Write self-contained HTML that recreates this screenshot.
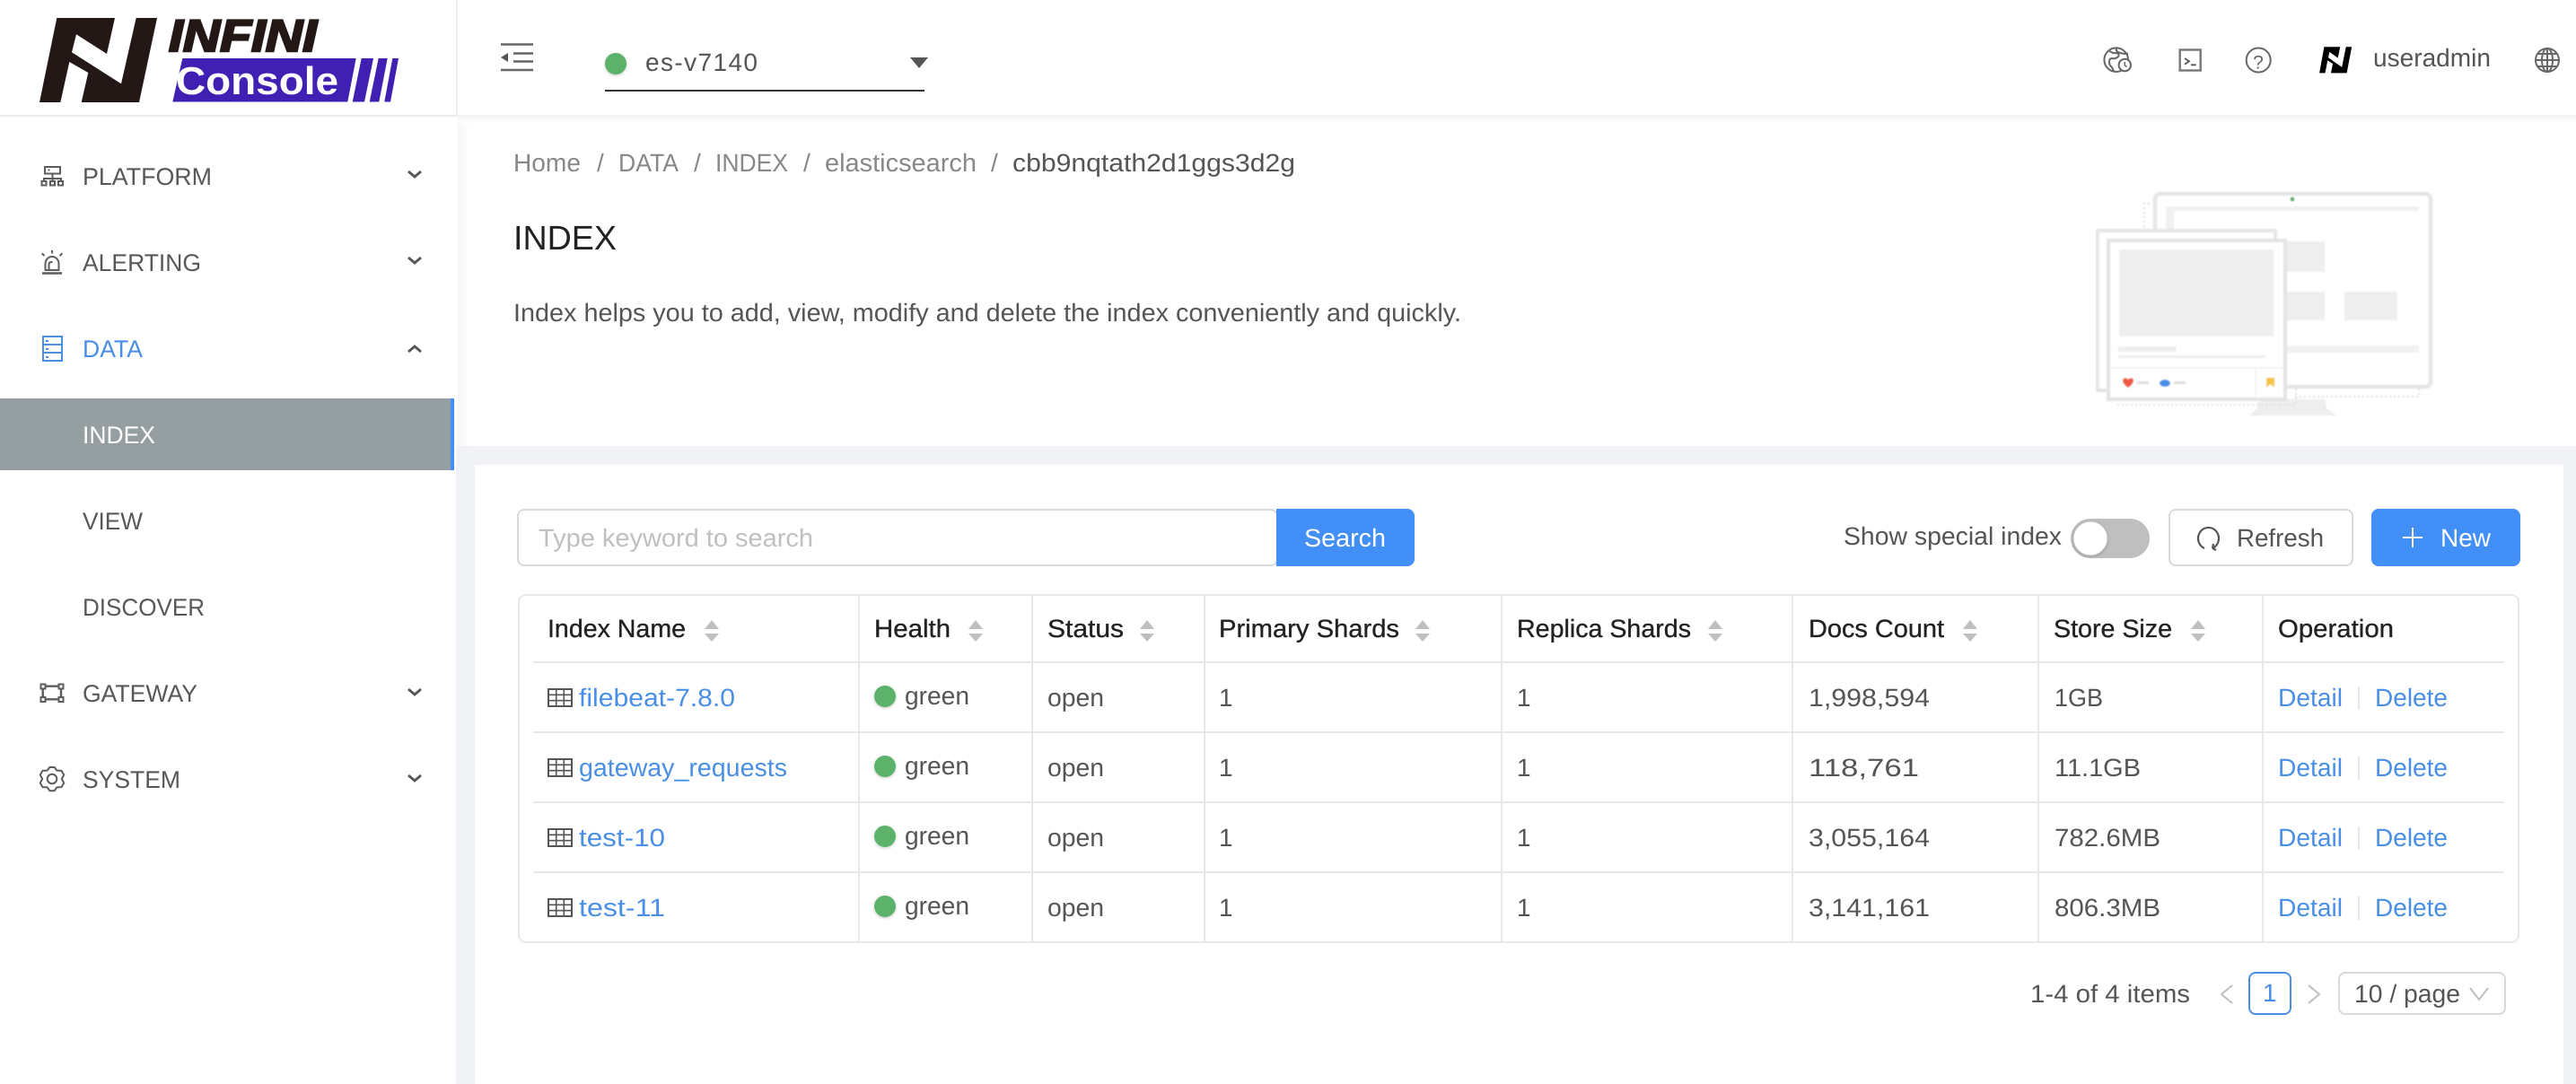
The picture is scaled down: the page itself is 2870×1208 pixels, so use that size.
<!DOCTYPE html>
<html><head><meta charset="utf-8"><title>INDEX</title>
<style>
html,body{margin:0;padding:0;width:2870px;height:1208px;overflow:hidden;background:#f0f2f5}
svg{display:block}
text{font-family:"Liberation Sans",sans-serif;font-size:28px;fill:#555;text-rendering:geometricPrecision}
.m{font-size:27px;fill:#585858}
.h{fill:#222;stroke:#222;stroke-width:.35}
.l{fill:#4a8fe6}
.b{fill:#888}
.i{fill:none;stroke:#666;stroke-width:2}
.c{fill:none;stroke:#555;stroke-width:2.8}
.s{fill:#bfbfbf}
.v{stroke:#e8e8e8;stroke-width:2}
</style></head><body>
<svg width="2870" height="1208" viewBox="0 0 2870 1208" xmlns="http://www.w3.org/2000/svg">
<defs>
<linearGradient id="sd" x1="0" y1="0" x2="0" y2="1"><stop offset="0" stop-color="#f2f2f2"/><stop offset="1" stop-color="#fff"/></linearGradient>
<linearGradient id="sr" x1="0" y1="0" x2="1" y2="0"><stop offset="0" stop-color="#f6f6f6"/><stop offset="1" stop-color="#fff"/></linearGradient>
<filter id="bl" x="-5%" y="-5%" width="110%" height="110%"><feGaussianBlur stdDeviation=".8"/></filter>
<filter id="ds" x="-40%" y="-40%" width="180%" height="180%"><feDropShadow dx="0" dy="1" stdDeviation="1.5" flood-color="#000" flood-opacity=".22"/></filter>
<polygon id="nm" points="44,114 63.3,20 128,20 119,60 85,38.3 80,58.3 135,93.3 151.7,20 175,20 155,114 90.7,114 98.3,81 77.3,69 67.3,114"/>
<g id="grid"><rect x="1" y="1" width="26" height="19" fill="none" stroke="#555" stroke-width="2"/><path d="M1 7.3H27M1 13.7H27M9.7 1V20M18.3 1V20" stroke="#555" stroke-width="1.6" fill="none"/></g>
<g id="sort" class="s"><polygon points="0,-9 8,1 -8,1"/><polygon points="-8,6 8,6 0,15"/></g>
</defs>

<!-- page areas -->
<rect x="0" y="0" width="2870" height="1208" fill="#f0f2f5"/>
<rect x="508" y="0" width="2362" height="497" fill="#fff"/>
<rect x="510" y="128" width="12" height="369" fill="url(#sr)"/>
<rect x="510" y="128" width="2360" height="10" fill="url(#sd)"/>
<rect x="529" y="518" width="2327" height="690" fill="#fff"/>

<!-- sidebar -->
<rect x="0" y="0" width="508" height="1208" fill="#fff"/>
<rect x="508" y="0" width="2" height="128" fill="#eee"/>
<rect x="0" y="128" width="510" height="2" fill="#ececec"/>
<rect x="0" y="444" width="502" height="80" fill="#959ea1"/>
<rect x="502" y="444" width="4" height="80" fill="#418ff7"/>

<!-- logo -->
<use href="#nm" fill="#231815"/>
<text x="188" y="57" textLength="165" lengthAdjust="spacingAndGlyphs" style="font-size:50px;font-weight:bold;font-style:italic;fill:#231815;stroke:#231815;stroke-width:2.4">INFINI</text>
<polygon points="203.3,65 396.700,65 387.300,113.500 192.300,113.500" fill="#4020b3"/>
<polygon points="402.700,65 416,65 406,113.500 392.700,113.500" fill="#4020b3"/>
<polygon points="421.700,65 431.700,65 422.300,113.500 411.700,113.500" fill="#4020b3"/>
<polygon points="437.300,65 444,65 435,113.500 428.300,113.500" fill="#4020b3"/>
<text x="196" y="105" textLength="181" lengthAdjust="spacingAndGlyphs" style="font-size:43.500px;font-weight:bold;fill:#fff">Console</text>

<!-- menu -->
<g>
<text class="m" x="92" y="206" textLength="144" lengthAdjust="spacingAndGlyphs">PLATFORM</text>
<text class="m" x="92" y="302" textLength="132" lengthAdjust="spacingAndGlyphs">ALERTING</text>
<text class="m" x="92" y="398" textLength="67" lengthAdjust="spacingAndGlyphs" style="fill:#4a8fe6">DATA</text>
<text class="m" x="92" y="494" textLength="81" lengthAdjust="spacingAndGlyphs" style="fill:#fff">INDEX</text>
<text class="m" x="92" y="590" textLength="67" lengthAdjust="spacingAndGlyphs">VIEW</text>
<text class="m" x="92" y="686" textLength="136" lengthAdjust="spacingAndGlyphs">DISCOVER</text>
<text class="m" x="92" y="782" textLength="128" lengthAdjust="spacingAndGlyphs">GATEWAY</text>
<text class="m" x="92" y="878" textLength="109" lengthAdjust="spacingAndGlyphs">SYSTEM</text>
<path class="c" d="M455 191l7 6 7-6M455 287l7 6 7-6M455 768l7 6 7-6M455 864l7 6 7-6M455 392l7-6 7 6"/>
<!-- platform -->
<g fill="none" stroke="#5c5c5c" stroke-width="2"><rect x="50" y="186" width="17" height="7.500"/><path d="M58.500 193.500V199M49 202V199H68V202M58.500 199V202"/><rect x="46.500" y="202" width="5" height="4.500"/><rect x="56" y="202" width="5" height="4.500"/><rect x="65" y="202" width="5" height="4.500"/></g>
<rect x="53.500" y="188.500" width="2" height="2" fill="#5c5c5c"/>
<!-- alerting -->
<g fill="none" stroke="#5c5c5c" stroke-width="2"><path d="M47 304.500H69" stroke-width="2.400"/><path d="M50.500 301V294a7.500 8 0 0 1 15 0V301ZM54.500 301V295q0-3 3-3h1M58 279v3.500M46.700 282.300l2.700 2.700M69.300 282.300l-2.700 2.700"/></g>
<!-- data -->
<g fill="none" stroke="#4a8fe6" stroke-width="2"><rect x="48" y="375" width="21" height="27"/><path d="M48 384H69M48 393H69M51 380h3M51 389h3M51 398h3"/></g>
<!-- gateway -->
<g fill="none" stroke="#5c5c5c" stroke-width="2"><path d="M50.700 764.700H65.500M50.700 779.300H65.500M47.700 767.700V776.700M68 767.700V776.700" stroke-width="2.400"/><rect x="45.500" y="762.500" width="5" height="5"/><rect x="65.500" y="762.500" width="5" height="5"/><rect x="45.500" y="777" width="5" height="5"/><rect x="65.500" y="777" width="5" height="5"/></g>
<!-- system -->
<g fill="none" stroke="#5c5c5c" stroke-width="2" stroke-linejoin="round"><polygon points="55.330,855 60.670,855 63.400,858.650 68.570,858.820 71.240,863.440 68.800,868 71.240,872.560 68.570,877.180 63.400,877.350 60.670,881.200 55.330,881.200 52.600,877.350 47.430,877.180 44.760,872.560 47.200,868 44.760,863.440 47.430,858.820 52.600,858.650"/><circle cx="58" cy="868" r="5.300"/></g>
</g>

<!-- top bar -->
<g stroke="#666" fill="none"><path d="M558 49.500H594M572 59.500H594M572 68.500H594M558 78H594" stroke-width="2.600"/></g>
<polygon points="558,64 566,59 566,69" fill="#555"/>
<circle cx="686" cy="71" r="12" fill="#5cb26b" filter="url(#ds)"/>
<text x="719" y="79" textLength="125" lengthAdjust="spacing">es-v7140</text>
<polygon points="1014,64 1034,64 1024,76" fill="#555"/>
<rect x="674" y="100" width="356" height="2" fill="#333"/>

<!-- top right -->
<g class="i">
<circle cx="2357.700" cy="66.700" r="13.300"/>
<path d="M2349 56q5 4 9 3q4 1 2 4q-3 3-7 2q-3 0-3 4q0 4 3 6l2 4M2358 53.500q-1 4 3 5q4 2 10 1"/>
<circle cx="2367.300" cy="72.500" r="6.700" fill="#fff"/><path d="M2367.300 69v4l2.500 1.500" stroke-width="1.500"/>
<rect x="2428.700" y="55.500" width="23" height="23" stroke="#777" stroke-width="2.400"/>
<path d="M2434 65l5 3.300-5 3.400M2441 72.300h5.700" stroke-width="1.800" stroke="#555"/>
<circle cx="2516.200" cy="67" r="13.500"/>
<circle cx="2838" cy="67" r="13"/>
<ellipse cx="2838" cy="67" rx="6" ry="13"/>
<path d="M2825 67H2851M2827 60H2849M2827 74H2849M2838 54V80"/>
</g>
<text x="2516" y="76.500" text-anchor="middle" style="font-size:21px;fill:#666">?</text>
<use href="#nm" fill="#000" transform="translate(2572,46) scale(.275,.31)"/>
<text x="2644" y="74" textLength="131" lengthAdjust="spacingAndGlyphs">useradmin</text>

<!-- breadcrumb -->
<text class="b" x="572" y="191" textLength="75" lengthAdjust="spacingAndGlyphs">Home</text>
<text class="b" x="665" y="191">/</text>
<text class="b" x="689" y="191" textLength="67" lengthAdjust="spacingAndGlyphs">DATA</text>
<text class="b" x="773" y="191">/</text>
<text class="b" x="797" y="191" textLength="81" lengthAdjust="spacingAndGlyphs">INDEX</text>
<text class="b" x="895" y="191">/</text>
<text class="b" x="919" y="191" textLength="169" lengthAdjust="spacingAndGlyphs">elasticsearch</text>
<text class="b" x="1104" y="191">/</text>
<text x="1128" y="191" textLength="315" lengthAdjust="spacingAndGlyphs">cbb9nqtath2d1ggs3d2g</text>
<text x="572" y="278" textLength="115" lengthAdjust="spacingAndGlyphs" style="font-size:38px;fill:#222">INDEX</text>
<text x="572" y="358" textLength="1056" lengthAdjust="spacingAndGlyphs">Index helps you to add, view, modify and delete the index conveniently and quickly.</text>

<!-- illustration -->
<g filter="url(#bl)">
<polygon points="2517,445 2590,445 2592,455 2603,463 2506,463 2515,455" fill="#eee"/>
<path d="M2389 268V227H2396M2555 276h3V451H2360V446M2557 442H2695V432" fill="none" stroke="#ddd" stroke-width="2" stroke-dasharray="2 3"/>
<rect x="2401" y="216" width="307" height="215" rx="6" fill="#fff" stroke="#e6e6e6" stroke-width="4.500"/>
<circle cx="2554" cy="222" r="2.500" fill="#5cb26b"/>
<rect x="2413" y="230" width="282" height="163" fill="#f1f1f1"/>
<rect x="2422" y="235" width="279" height="150" fill="#fff"/>
<rect x="2500" y="269" width="90" height="34" fill="#eee"/>
<rect x="2500" y="325" width="90" height="32" fill="#eee"/>
<rect x="2612" y="325" width="59" height="32" fill="#eee"/>
<rect x="2337" y="257" width="198" height="178" fill="#fff" stroke="#e6e6e6" stroke-width="4"/>
<rect x="2349" y="268" width="197" height="177" fill="#fff" stroke="#e4e4e4" stroke-width="4"/>
<rect x="2361" y="278" width="172" height="97" fill="#eee"/>
<rect x="2360" y="386" width="65" height="6" fill="#eee"/>
<rect x="2360" y="396" width="164" height="3" fill="#eee"/>
<path d="M2351 410H2544M2513 410V443" stroke="#f1f1f1" stroke-width="1.500"/>
<path d="M2371 432c-3-2-6-5-6-8 0-3 4-4 6-1 2-3 6-2 6 1 0 3-3 6-6 8Z" fill="#ee5a3f"/>
<rect x="2381" y="425" width="13" height="3" fill="#ddd"/>
<ellipse cx="2412" cy="427" rx="6" ry="4" fill="#4a8fe6"/>
<rect x="2422" y="425" width="13" height="3" fill="#ddd"/>
<polygon points="2525,421 2534,421 2534,432 2529.500,428 2525,432" fill="#f5c243"/>
</g>

<!-- toolbar -->
<rect x="577" y="568" width="846" height="62" rx="7" fill="#fff" stroke="#d9d9d9" stroke-width="2"/>
<text x="600" y="609" textLength="306" lengthAdjust="spacingAndGlyphs" style="fill:#bfbfbf">Type keyword to search</text>
<path d="M1422 567h146a8 8 0 0 1 8 8v48a8 8 0 0 1-8 8h-146Z" fill="#418ff7"/>
<text x="1453" y="609" textLength="91" lengthAdjust="spacingAndGlyphs" style="fill:#fff">Search</text>
<text x="2054" y="607" textLength="243" lengthAdjust="spacingAndGlyphs">Show special index</text>
<rect x="2307" y="578" width="88" height="44" rx="22" fill="#bfbfbf"/>
<circle cx="2329" cy="600" r="19" fill="#fff" stroke="#bfbfbf" stroke-width="1" filter="url(#ds)"/>
<rect x="2417" y="568" width="204" height="62" rx="7" fill="#fff" stroke="#d9d9d9" stroke-width="2"/>
<path d="M2456 611a11.500 12 0 1 1 9 0M2465 611l1-5M2465 611l4 2" fill="none" stroke="#555" stroke-width="2.200"/>
<text x="2492" y="609" textLength="97" lengthAdjust="spacingAndGlyphs">Refresh</text>
<rect x="2642" y="567" width="166" height="64" rx="8" fill="#418ff7"/>
<path d="M2688 588V610M2677 599H2699" stroke="#fff" stroke-width="2"/>
<text x="2719" y="609" textLength="56" lengthAdjust="spacingAndGlyphs" style="fill:#fff">New</text>

<!-- table -->
<rect x="578" y="663" width="2228" height="387" rx="8" fill="#fff" stroke="#e8e8e8" stroke-width="2"/>
<path class="v" d="M594 738H2790M594 816H2790M594 894H2790M594 972H2790"/>
<path class="v" d="M957 663V1050M1150 663V1050M1342 663V1050M1673 663V1050M1997 663V1050M2271 663V1050M2521 663V1050"/>
<text class="h" x="610" y="710" textLength="154" lengthAdjust="spacingAndGlyphs">Index Name</text>
<text class="h" x="974" y="710" textLength="85" lengthAdjust="spacingAndGlyphs">Health</text>
<text class="h" x="1167" y="710" textLength="85" lengthAdjust="spacingAndGlyphs">Status</text>
<text class="h" x="1358" y="710" textLength="201" lengthAdjust="spacingAndGlyphs">Primary Shards</text>
<text class="h" x="1690" y="710" textLength="194" lengthAdjust="spacingAndGlyphs">Replica Shards</text>
<text class="h" x="2015" y="710" textLength="151" lengthAdjust="spacingAndGlyphs">Docs Count</text>
<text class="h" x="2288" y="710" textLength="132" lengthAdjust="spacingAndGlyphs">Store Size</text>
<text class="h" x="2538" y="710" textLength="129" lengthAdjust="spacingAndGlyphs">Operation</text>
<use href="#sort" transform="translate(793,700)"/><use href="#sort" transform="translate(1087,700)"/><use href="#sort" transform="translate(1278,700)"/><use href="#sort" transform="translate(1585,700)"/><use href="#sort" transform="translate(1911,700)"/><use href="#sort" transform="translate(2195,700)"/><use href="#sort" transform="translate(2449,700)"/>

<!-- row 1 -->
<use href="#grid" transform="translate(610,767)"/>
<text class="l" x="645" y="787" textLength="174" lengthAdjust="spacingAndGlyphs">filebeat-7.8.0</text>
<circle cx="986" cy="776" r="12" fill="#5cb26b" filter="url(#ds)"/>
<text x="1008" y="785" textLength="72" lengthAdjust="spacingAndGlyphs">green</text>
<text x="1167" y="787" textLength="63" lengthAdjust="spacingAndGlyphs">open</text>
<text x="1358" y="787">1</text><text x="1690" y="787">1</text>
<text x="2015" y="787" textLength="135" lengthAdjust="spacingAndGlyphs">1,998,594</text>
<text x="2289" y="787" textLength="54" lengthAdjust="spacingAndGlyphs">1GB</text>
<text class="l" x="2538" y="787" textLength="72" lengthAdjust="spacingAndGlyphs">Detail</text>
<rect x="2627" y="765" width="2" height="26" fill="#e8e8e8"/>
<text class="l" x="2646" y="787" textLength="81" lengthAdjust="spacingAndGlyphs">Delete</text>
<!-- row 2 -->
<use href="#grid" transform="translate(610,845)"/>
<text class="l" x="645" y="865" textLength="232" lengthAdjust="spacingAndGlyphs">gateway_requests</text>
<circle cx="986" cy="854" r="12" fill="#5cb26b" filter="url(#ds)"/>
<text x="1008" y="863" textLength="72" lengthAdjust="spacingAndGlyphs">green</text>
<text x="1167" y="865" textLength="63" lengthAdjust="spacingAndGlyphs">open</text>
<text x="1358" y="865">1</text><text x="1690" y="865">1</text>
<text x="2015" y="865" textLength="123" lengthAdjust="spacingAndGlyphs">118,761</text>
<text x="2289" y="865" textLength="96" lengthAdjust="spacingAndGlyphs">11.1GB</text>
<text class="l" x="2538" y="865" textLength="72" lengthAdjust="spacingAndGlyphs">Detail</text>
<rect x="2627" y="843" width="2" height="26" fill="#e8e8e8"/>
<text class="l" x="2646" y="865" textLength="81" lengthAdjust="spacingAndGlyphs">Delete</text>
<!-- row 3 -->
<use href="#grid" transform="translate(610,923)"/>
<text class="l" x="645" y="943" textLength="96" lengthAdjust="spacingAndGlyphs">test-10</text>
<circle cx="986" cy="932" r="12" fill="#5cb26b" filter="url(#ds)"/>
<text x="1008" y="941" textLength="72" lengthAdjust="spacingAndGlyphs">green</text>
<text x="1167" y="943" textLength="63" lengthAdjust="spacingAndGlyphs">open</text>
<text x="1358" y="943">1</text><text x="1690" y="943">1</text>
<text x="2015" y="943" textLength="135" lengthAdjust="spacingAndGlyphs">3,055,164</text>
<text x="2289" y="943" textLength="118" lengthAdjust="spacingAndGlyphs">782.6MB</text>
<text class="l" x="2538" y="943" textLength="72" lengthAdjust="spacingAndGlyphs">Detail</text>
<rect x="2627" y="921" width="2" height="26" fill="#e8e8e8"/>
<text class="l" x="2646" y="943" textLength="81" lengthAdjust="spacingAndGlyphs">Delete</text>
<!-- row 4 -->
<use href="#grid" transform="translate(610,1001)"/>
<text class="l" x="645" y="1021" textLength="96" lengthAdjust="spacingAndGlyphs">test-11</text>
<circle cx="986" cy="1010" r="12" fill="#5cb26b" filter="url(#ds)"/>
<text x="1008" y="1019" textLength="72" lengthAdjust="spacingAndGlyphs">green</text>
<text x="1167" y="1021" textLength="63" lengthAdjust="spacingAndGlyphs">open</text>
<text x="1358" y="1021">1</text><text x="1690" y="1021">1</text>
<text x="2015" y="1021" textLength="135" lengthAdjust="spacingAndGlyphs">3,141,161</text>
<text x="2289" y="1021" textLength="118" lengthAdjust="spacingAndGlyphs">806.3MB</text>
<text class="l" x="2538" y="1021" textLength="72" lengthAdjust="spacingAndGlyphs">Detail</text>
<rect x="2627" y="999" width="2" height="26" fill="#e8e8e8"/>
<text class="l" x="2646" y="1021" textLength="81" lengthAdjust="spacingAndGlyphs">Delete</text>

<!-- pagination -->
<text x="2262" y="1117" textLength="178" lengthAdjust="spacingAndGlyphs">1-4 of 4 items</text>
<path d="M2487 1098l-12 10 12 10" fill="none" stroke="#bfbfbf" stroke-width="2"/>
<rect x="2506" y="1084" width="46" height="46" rx="7" fill="#fff" stroke="#4a8fe6" stroke-width="2"/>
<text x="2521" y="1116" style="fill:#4a8fe6">1</text>
<path d="M2572 1098l12 10-12 10" fill="none" stroke="#bfbfbf" stroke-width="2"/>
<rect x="2606" y="1084" width="185" height="46" rx="7" fill="#fff" stroke="#d9d9d9" stroke-width="2"/>
<text x="2623" y="1117" textLength="118" lengthAdjust="spacingAndGlyphs">10 / page</text>
<path d="M2752 1101l10 13 10-13" fill="none" stroke="#bfbfbf" stroke-width="2"/>
</svg>
</body></html>
